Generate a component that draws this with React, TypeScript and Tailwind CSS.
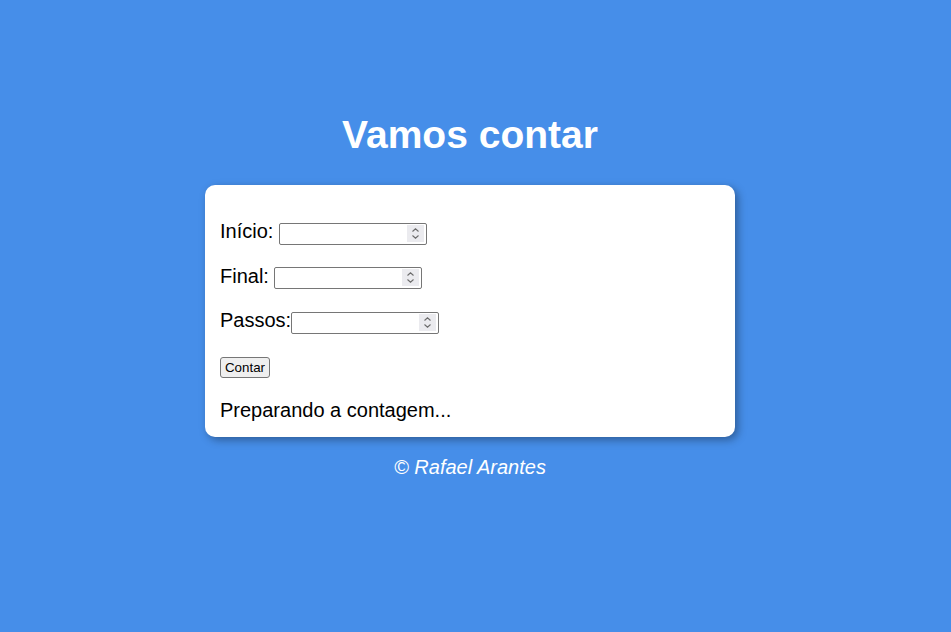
import React from "react";

function NumberField({ width }: { width: number }) {
  return (
    <span className="relative inline-block align-baseline" style={{ width }}>
      <input
        type="number"
        className="block h-[22px] w-full rounded-[2px] border border-[#767676] bg-white px-[2px] text-[13.33px] text-black outline-none [appearance:textfield] [&::-webkit-inner-spin-button]:appearance-none [&::-webkit-outer-spin-button]:appearance-none"
        style={{ fontFamily: '"Liberation Sans", Arial, sans-serif' }}
      />
      <span className="pointer-events-none absolute right-[3px] top-[2px] flex h-[17px] w-[17px] items-center justify-center bg-[#ebebef]">
        <svg width="9" height="13" viewBox="0 0 9 13" fill="none" stroke="#6b6b6b" strokeWidth="1.1">
          <path d="M1.5 4.5 L4.5 1.8 L7.5 4.5" />
          <path d="M1.5 8.5 L4.5 11.2 L7.5 8.5" />
        </svg>
      </span>
    </span>
  );
}

export default function App() {
  return (
    <div
      className="min-h-[632px] w-full bg-[#468ee9]"
      style={{ fontFamily: '"Liberation Sans", Arial, sans-serif' }}
    >
      <div className="flex w-[940px] flex-col items-center pt-[113px]">
        <h1 className="text-[39px] font-bold leading-[44px] text-white">Vamos contar</h1>
        <div className="mt-[28px] w-[530px] rounded-[10px] bg-white px-[15px] pb-[15px] pt-[35px] text-[20px] leading-[23px] text-black shadow-[3px_3px_8px_rgba(0,0,0,0.35)]">
          <div className="flex flex-col gap-[20px]">
            <div className="flex items-baseline">
              <span>Início:&nbsp;</span>
              <NumberField width={148} />
            </div>
            <div className="flex items-baseline">
              <span>Final:&nbsp;</span>
              <NumberField width={148} />
            </div>
            <div className="flex items-baseline">
              <span>Passos:</span>
              <NumberField width={148} />
            </div>
          </div>
          <div className="mt-[23px] flex">
            <button className="h-[21px] w-[50px] rounded-[3px] border border-[#767676] bg-[#efefef] text-[13.33px] leading-[19px] text-black">
              Contar
            </button>
          </div>
          <p className="mt-[21px]">Preparando a contagem...</p>
        </div>
        <p className="mt-[19px] text-[20px] italic leading-[23px] text-white">© Rafael Arantes</p>
      </div>
    </div>
  );
}
